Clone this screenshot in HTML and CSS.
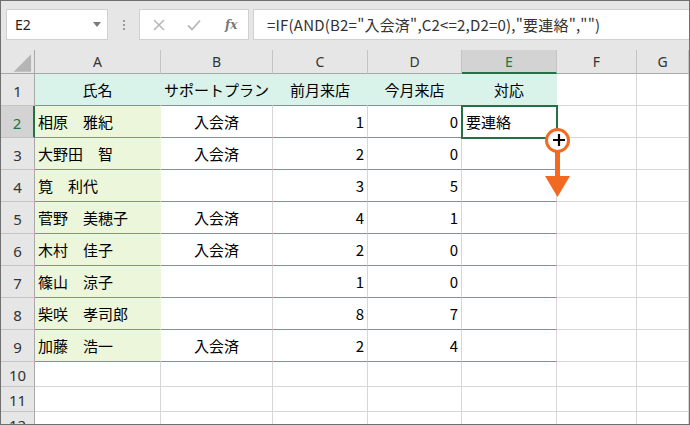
FILE: index.html
```html
<!DOCTYPE html>
<html lang="ja">
<head>
  <meta charset="UTF-8">
  <title>Excel 要連絡</title>
  <link rel="stylesheet" href="styles.css">
</head>
<body>
  <div class="window">
    <div class="toolbar">
      <div class="namebox">
        <span>E2</span>
        <svg class="caret" width="8" height="5" viewBox="0 0 8 5"><path d="M0 0H8L4 5Z" fill="#7a7a7a"/></svg>
      </div>
      <div class="grip"><i></i><i></i><i></i></div>
      <div class="fxbox">
        <svg width="12" height="12" viewBox="0 0 12 12"><path d="M1 1L11 11M11 1L1 11" stroke="#b8b8b8" stroke-width="1.6"/></svg>
        <svg width="14" height="12" viewBox="0 0 14 12"><path d="M1 6.5L5 10.5L13 1.5" stroke="#b8b8b8" stroke-width="1.8" fill="none"/></svg>
        <span class="fx">fx</span>
      </div>
      <div class="formula">=IF(AND(B2="入会済",C2&lt;=2,D2=0),"要連絡","")</div>
    </div>

    <div class="sheet">
      <div class="row colheads">
        <div class="cell rh corner">
          <svg width="34" height="24" viewBox="0 0 34 24"><path d="M13 22H31V4Z" fill="#b5b5b5"/></svg>
        </div>
        <div class="cell ch ca">A</div>
        <div class="cell ch cb">B</div>
        <div class="cell ch cc">C</div>
        <div class="cell ch cd">D</div>
        <div class="cell ch ce active">E</div>
        <div class="cell ch cf">F</div>
        <div class="cell ch cg">G</div>
      </div>

      <div class="row tall">
        <div class="cell rh">1</div>
        <div class="cell ca head center">氏名</div>
        <div class="cell cb head center">サポートプラン</div>
        <div class="cell cc head center">前月来店</div>
        <div class="cell cd head center">今月来店</div>
        <div class="cell ce head center">対応</div>
        <div class="cell cf"></div>
        <div class="cell cg"></div>
      </div>

      <div class="row tall">
        <div class="cell rh active">2</div>
        <div class="cell ca name">相原　雅紀</div>
        <div class="cell cb data center">入会済</div>
        <div class="cell cc data right">1</div>
        <div class="cell cd data right">0</div>
        <div class="cell ce data selected">要連絡</div>
        <div class="cell cf"></div>
        <div class="cell cg"></div>
      </div>

      <div class="row tall">
        <div class="cell rh">3</div>
        <div class="cell ca name">大野田　智</div>
        <div class="cell cb data center">入会済</div>
        <div class="cell cc data right">2</div>
        <div class="cell cd data right">0</div>
        <div class="cell ce data"></div>
        <div class="cell cf"></div>
        <div class="cell cg"></div>
      </div>

      <div class="row tall">
        <div class="cell rh">4</div>
        <div class="cell ca name">筧　利代</div>
        <div class="cell cb data center"></div>
        <div class="cell cc data right">3</div>
        <div class="cell cd data right">5</div>
        <div class="cell ce data"></div>
        <div class="cell cf"></div>
        <div class="cell cg"></div>
      </div>

      <div class="row tall">
        <div class="cell rh">5</div>
        <div class="cell ca name">菅野　美穂子</div>
        <div class="cell cb data center">入会済</div>
        <div class="cell cc data right">4</div>
        <div class="cell cd data right">1</div>
        <div class="cell ce data"></div>
        <div class="cell cf"></div>
        <div class="cell cg"></div>
      </div>

      <div class="row tall">
        <div class="cell rh">6</div>
        <div class="cell ca name">木村　佳子</div>
        <div class="cell cb data center">入会済</div>
        <div class="cell cc data right">2</div>
        <div class="cell cd data right">0</div>
        <div class="cell ce data"></div>
        <div class="cell cf"></div>
        <div class="cell cg"></div>
      </div>

      <div class="row tall">
        <div class="cell rh">7</div>
        <div class="cell ca name">篠山　涼子</div>
        <div class="cell cb data center"></div>
        <div class="cell cc data right">1</div>
        <div class="cell cd data right">0</div>
        <div class="cell ce data"></div>
        <div class="cell cf"></div>
        <div class="cell cg"></div>
      </div>

      <div class="row tall">
        <div class="cell rh">8</div>
        <div class="cell ca name">柴咲　孝司郎</div>
        <div class="cell cb data center"></div>
        <div class="cell cc data right">8</div>
        <div class="cell cd data right">7</div>
        <div class="cell ce data"></div>
        <div class="cell cf"></div>
        <div class="cell cg"></div>
      </div>

      <div class="row tall">
        <div class="cell rh">9</div>
        <div class="cell ca name">加藤　浩一</div>
        <div class="cell cb data center">入会済</div>
        <div class="cell cc data right">2</div>
        <div class="cell cd data right">4</div>
        <div class="cell ce data"></div>
        <div class="cell cf"></div>
        <div class="cell cg"></div>
      </div>

      <div class="row short">
        <div class="cell rh">10</div>
        <div class="cell ca"></div>
        <div class="cell cb"></div>
        <div class="cell cc"></div>
        <div class="cell cd"></div>
        <div class="cell ce"></div>
        <div class="cell cf"></div>
        <div class="cell cg"></div>
      </div>

      <div class="row short">
        <div class="cell rh">11</div>
        <div class="cell ca"></div>
        <div class="cell cb"></div>
        <div class="cell cc"></div>
        <div class="cell cd"></div>
        <div class="cell ce"></div>
        <div class="cell cf"></div>
        <div class="cell cg"></div>
      </div>

      <div class="row short">
        <div class="cell rh">12</div>
        <div class="cell ca"></div>
        <div class="cell cb"></div>
        <div class="cell cc"></div>
        <div class="cell cd"></div>
        <div class="cell ce"></div>
        <div class="cell cf"></div>
        <div class="cell cg"></div>
      </div>
    </div>

    <!-- fill handle drag annotation -->
    <svg class="drag" width="40" height="80" viewBox="540 125 40 80">
      <line x1="557.5" y1="151" x2="557.5" y2="178" stroke="#f26a22" stroke-width="5"/>
      <path d="M545 176H570L557.5 197Z" fill="#f26a22"/>
      <circle cx="557.5" cy="140.5" r="11" fill="#fff" stroke="#f26a22" stroke-width="3"/>
      <path d="M559 133.5V146.5M552.5 140H565.5" stroke="#fff" stroke-width="4.5"/>
      <path d="M559 134V146M553 140H565" stroke="#000" stroke-width="2.2"/>
    </svg>
  </div>
</body>
</html>
```

FILE: styles.css
```css
* {
  box-sizing: border-box;
}
body {
  margin: 0;
  font-family: "Noto Sans CJK JP", "Noto Sans", sans-serif;
}
.window {
  position: relative;
  width: 690px;
  height: 425px;
  border: 1px solid #6f6f6f;
  background-color: #fff;
  overflow: hidden;
}
.toolbar {
  display: flex;
  align-items: flex-start;
  height: 49px;
  padding: 8px 0 0 5px;
  background-color: #e6e6e6;
}
.namebox {
  display: flex;
  align-items: center;
  justify-content: space-between;
  width: 102px;
  height: 31px;
  padding: 0 6px 0 8px;
  background-color: #fff;
  border: 1px solid #d0d0d0;
  font-family: "Noto Sans", sans-serif;
  font-size: 14px;
  color: #222;
}
.grip {
  display: flex;
  flex-direction: column;
  align-items: center;
  gap: 2px;
  width: 31px;
  padding-top: 11px;
}
.grip i {
  width: 2px;
  height: 2px;
  background-color: #9a9a9a;
}
.fxbox {
  display: flex;
  align-items: center;
  width: 110px;
  height: 31px;
  padding: 0 0 0 13px;
  gap: 22px;
  background-color: #fff;
  border: 1px solid #d0d0d0;
}
.fx {
  margin-left: 2px;
  font-family: "DejaVu Serif", serif;
  font-style: italic;
  font-weight: bold;
  font-size: 12px;
  color: #777;
}
.formula {
  flex: 1;
  height: 31px;
  margin-left: 4px;
  padding-left: 13px;
  background-color: #fff;
  border: 1px solid #d0d0d0;
  border-right: none;
  font-size: 15px;
  letter-spacing: 0.2px;
  line-height: 29px;
  color: #333;
  white-space: nowrap;
}
.sheet {
  display: flex;
  flex-direction: column;
}
.row {
  display: flex;
}
.colheads {
  height: 24px;
}
.tall {
  height: 32px;
}
.short {
  height: 25px;
}
.cell {
  display: flex;
  align-items: center;
  height: 100%;
  padding: 0 3px;
  border-right: 1px solid #d6d6d6;
  border-bottom: 1px solid #d6d6d6;
  font-size: 15px;
  color: #000;
  white-space: nowrap;
}
.ca { width: 126px; }
.cb { width: 112px; }
.cc { width: 95px; }
.cd { width: 94px; }
.ce { width: 95px; }
.cf { width: 80px; }
.cg { flex: 1; }

.rh {
  width: 34px;
  justify-content: center;
  padding: 2px 0 0;
  background-color: #e6e6e6;
  border-right: 1px solid #a8a8a8;
  border-bottom: 1px solid #c4c4c4;
  font-family: "Noto Sans", sans-serif;
  font-size: 15px;
  color: #333;
}
.rh.active {
  background-color: #d3d3d3;
  border-right: 2px solid #217346;
  color: #217346;
}
.corner {
  padding: 0;
  border-bottom-color: #a8a8a8;
}
.ch {
  justify-content: center;
  background-color: #e6e6e6;
  border-right-color: #c4c4c4;
  border-bottom-color: #a8a8a8;
  font-family: "Noto Sans", sans-serif;
  font-size: 14px;
  color: #333;
}
.ch.active {
  background-color: #d3d3d3;
  border-bottom: 2px solid #217346;
  color: #217346;
}
.head {
  background-color: #d9f2ea;
  border-right-color: #d9f2ea;
  border-bottom-color: #38b994;
}
.name {
  background-color: #ebf6db;
  border-right-color: #ebf6db;
  border-bottom-color: #38b994;
}
.data {
  border-bottom-color: #38b994;
}
.center {
  justify-content: center;
}
.right {
  justify-content: flex-end;
}
.selected {
  position: relative;
  padding-left: 4px;
}
.selected::after {
  content: "";
  position: absolute;
  top: -1px;
  left: -1px;
  right: -2px;
  bottom: -2px;
  border: 2px solid #217346;
}
.drag {
  position: absolute;
  left: 539px;
  top: 124px;
}
```
